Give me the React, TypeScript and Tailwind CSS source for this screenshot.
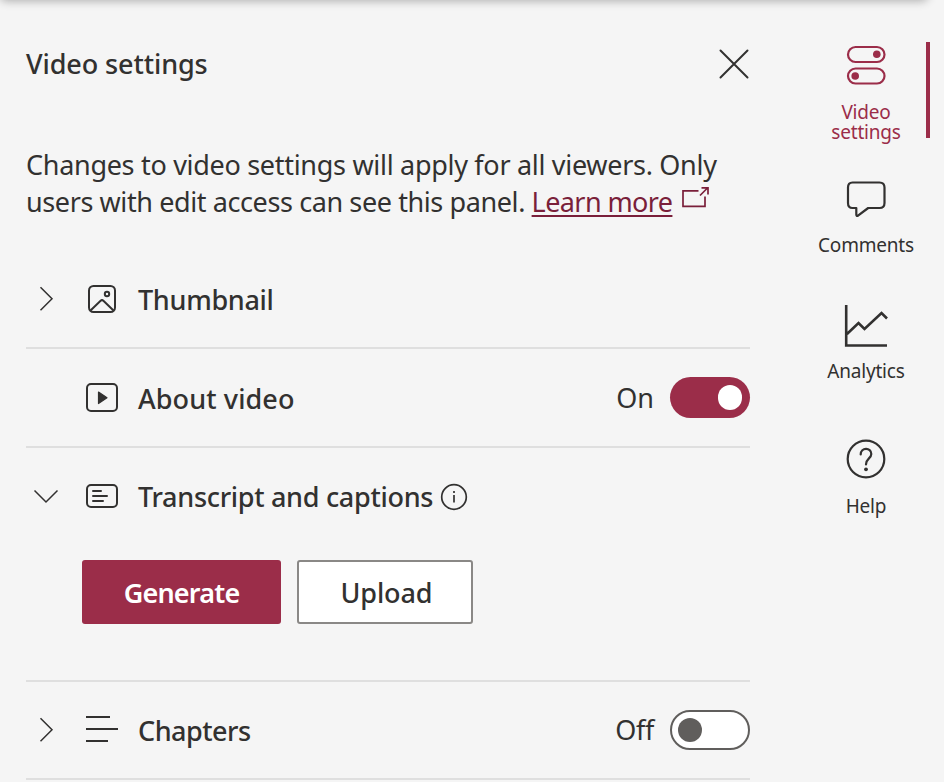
import type { ReactNode } from "react";

const INK = "#323130";
const ACCENT = "#9b2d49";

function Chevron({ down = false }: { down?: boolean }) {
  return (
    <svg className="w-10 h-10 shrink-0" viewBox="0 0 40 40" fill="none" stroke={INK} strokeWidth="1.5">
      {down ? <path d="M8.5 13.5 20 25 31.5 13.5" /> : <path d="M14.5 8.3 26 19.8 14.5 31.3" />}
    </svg>
  );
}

function ThumbnailIcon() {
  return (
    <svg className="w-8 h-8" viewBox="0 0 32 32" fill="none" stroke={INK} strokeWidth="2">
      <rect x="3" y="3" width="26" height="26" rx="4.5" />
      <circle cx="21" cy="11" r="2.2" />
      <path d="M4.5 27.5 14.6 17.7Q16 16.5 17.4 17.7L27.5 27.5" />
    </svg>
  );
}

function PlayIcon() {
  return (
    <svg className="w-8 h-8" viewBox="0 0 32 32" fill="none" stroke={INK} strokeWidth="2">
      <rect x="1" y="2" width="30" height="27" rx="4" />
      <path d="M12.5 10 21 15.7 12.5 21.5Z" fill={INK} strokeWidth="1.2" strokeLinejoin="round" />
    </svg>
  );
}

function CaptionIcon() {
  return (
    <svg className="w-8 h-8" viewBox="0 0 32 32" fill="none" stroke={INK} strokeWidth="2" strokeLinecap="round">
      <rect x="1" y="4" width="30" height="22" rx="4" />
      <path d="M7 10H15M7 15H21M7 20H17" />
    </svg>
  );
}

function ChaptersIcon() {
  return (
    <svg className="w-8 h-8" viewBox="0 0 32 32" fill="none" stroke={INK} strokeWidth="2">
      <path d="M0 3H24M0 15H32M0 27H22" />
    </svg>
  );
}

function Row({ chevron, icon, title, children, className = "h-[97px]" }: { chevron?: ReactNode; icon: ReactNode; title: ReactNode; children?: ReactNode; className?: string }) {
  return (
    <div className={`flex shrink-0 items-center ${className}`}>
      <div className="w-[60px] shrink-0">{chevron}</div>
      <div className="w-[52px] shrink-0">{icon}</div>
      {title}
      <div className="ml-auto flex items-center gap-4">{children}</div>
    </div>
  );
}

function Divider() {
  return <div className="h-0.5 shrink-0 bg-[#dfdfdf]" />;
}

function NavIcon({ children, accent = false }: { children: ReactNode; accent?: boolean }) {
  return (
    <svg className="w-12 h-12 shrink-0" viewBox="0 0 48 48" fill="none" stroke={accent ? ACCENT : INK} strokeWidth="2.2">
      {children}
    </svg>
  );
}

export default function App() {
  return (
    <div className="flex h-[782px] w-[944px] flex-col overflow-hidden bg-[#f5f5f5] font-['Noto_Sans','Segoe_UI',sans-serif] text-[#323130]">
      <div className="-mt-3 h-3 w-[928px] shrink-0 rounded-b-md shadow-[0_1px_10px_0px_rgba(0,0,0,0.3)]" />
      <div className="flex flex-1">
        <main className="ml-[26px] flex w-[724px] shrink-0 flex-col">
          <header className="mt-[42px] flex h-11 items-center justify-between">
            <h1 className="text-[27px] font-[550] leading-[44px] tracking-[-0.1px] whitespace-nowrap">Video settings</h1>
            <svg className="h-8 w-8" viewBox="0 0 32 32" stroke={INK} strokeWidth="2" strokeLinecap="round">
              <path d="M2.5 2.5 29.5 29.5M29.5 2.5 2.5 29.5" />
            </svg>
          </header>
          <p className="mt-[60px] h-[75px] text-[27px] leading-[37px] whitespace-nowrap">
            <span className="tracking-[-0.3px]">Changes to video settings will apply for all viewers. Only</span>
            <br />
            <span className="tracking-[-0.4px]">users with edit access can see this panel. </span>
            <a className="tracking-[-0.6px] text-[#7a1f3a] underline decoration-2 underline-offset-[3px]">Learn more</a>
            <svg className="ml-[9px] -mt-[14px] inline-block h-6 w-[30px]" viewBox="0 0 30 24" fill="none" stroke="#7a1f3a" strokeWidth="1.7">
              <path d="M17.5 4.8H2V20.3H24V10.5M19 9.5 26.5 2M20.5 1.8H27V8.5" />
            </svg>
          </p>
          <div className="h-[29px]" />
          <Row chevron={<Chevron />} icon={<ThumbnailIcon />} title={<h2 className="pt-[3px] text-[27px] font-[550] tracking-[-0.3px]">Thumbnail</h2>} />
          <Divider />
          <Row icon={<PlayIcon />} title={<h2 className="pt-[3px] text-[27px] font-[550] tracking-[0.1px]">About video</h2>}>
            <span className="pt-px text-[27px]">On</span>
            <div className="flex h-[41px] w-20 items-center justify-end rounded-full bg-[#9b2d49] pr-2">
              <div className="h-[25px] w-6 rounded-full bg-white" />
            </div>
          </Row>
          <Divider />
          <Row
            chevron={<Chevron down />}
            icon={<CaptionIcon />}
            title={
              <div className="flex items-center gap-[7px]">
                <h2 className="pt-[2px] text-[27px] font-[550] tracking-[-0.3px] whitespace-nowrap">Transcript and captions</h2>
                <svg className="h-7 w-7" viewBox="0 0 28 28" fill="none" stroke={INK} strokeWidth="1.7">
                  <circle cx="14" cy="14" r="12.3" />
                  <path d="M14 12V19.5M14 8V10" />
                </svg>
              </div>
            }
          />
          <div className="flex h-[135px] shrink-0 gap-4 pt-[15px] pl-14">
            <button className="h-16 w-[199px] rounded-[3px] bg-[#9b2d49] pt-[2px] text-[27px] font-semibold tracking-[-0.8px] text-white">Generate</button>
            <button className="h-16 w-44 rounded-[3px] border-2 border-[#8a8886] bg-white pt-[2px] pl-[3px] text-[27px] font-[550] tracking-[-0.1px]">Upload</button>
          </div>
          <Divider />
          <Row className="h-24" chevron={<Chevron />} icon={<ChaptersIcon />} title={<h2 className="pt-[3px] text-[27px] font-[550] tracking-[-0.5px]">Chapters</h2>}>
            <span className="pt-px text-[27px] tracking-[-0.3px]">Off</span>
            <div className="flex h-10 w-20 items-center rounded-full border-2 border-[#605e5c] bg-white pl-1.5">
              <div className="h-6 w-6 rounded-full bg-[#605e5c]" />
            </div>
          </Row>
          <Divider />
        </main>
        <nav className="ml-[52px] flex w-32 shrink-0 flex-col items-center text-[19px] leading-5 tracking-[-0.2px]">
          <div className="mt-[42px] flex h-24 w-32 justify-between">
            <div className="w-1" />
            <div className="flex w-[120px] flex-col items-center text-center text-[#9b2d49]">
              <NavIcon accent>
                <rect x="6" y="5" width="36.5" height="15" rx="7.5" />
                <rect x="6" y="26.5" width="36.5" height="15" rx="7.5" />
                <circle cx="34.8" cy="12.3" r="3.8" fill={ACCENT} stroke="none" />
                <circle cx="13.2" cy="34" r="3.8" fill={ACCENT} stroke="none" />
              </NavIcon>
              <span className="mt-3 w-[76px]">Video settings</span>
            </div>
            <div className="h-24 w-1 bg-[#9b2d49]" />
          </div>
          <div className="mt-[37px] flex flex-col items-center">
            <NavIcon>
              <path d="M10.5 7.5H37.5Q42.5 7.5 42.5 12.5V28Q42.5 33 37.5 33H26.2L16 40.7Q14.3 41.5 14.3 39.5V33H10.5Q6 33 6 28V12.5Q6 7.5 10.5 7.5Z" strokeLinejoin="round" />
            </NavIcon>
            <span className="mt-3">Comments</span>
          </div>
          <div className="mt-[46px] flex flex-col items-center">
            <NavIcon>
              <path d="M4.2 4V44.5H45M5 33 16.5 22 22.5 28 39.5 12 45 17.5" strokeWidth="2.6" />
            </NavIcon>
            <span className="mt-3">Analytics</span>
          </div>
          <div className="mt-[54px] flex flex-col items-center">
            <NavIcon>
              <circle cx="24" cy="24" r="18.3" />
              <path d="M18.7 19.5C18.7 12 29.3 12 29.3 19C29.3 23.5 24 23.5 24 29.5" strokeLinecap="round" />
              <circle cx="24" cy="34.3" r="1.9" fill={INK} stroke="none" />
            </NavIcon>
            <span className="mt-[13px]">Help</span>
          </div>
        </nav>
      </div>
    </div>
  );
}
